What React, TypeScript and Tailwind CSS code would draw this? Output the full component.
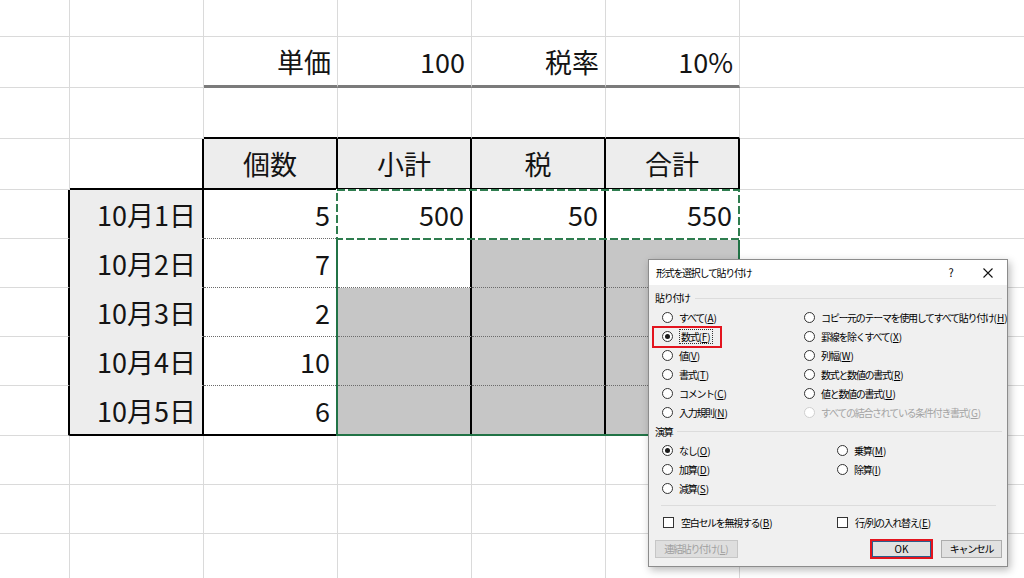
import React from 'react';

const colCount = 7;
const rowCount = 12;

const dates = ['10月1日', '10月2日', '10月3日', '10月4日', '10月5日'];
const counts = ['5', '7', '2', '10', '6'];

type CellText = { text: string; align: 'right' | 'center' };

function cellText(r: number, c: number): CellText | null {
  if (r === 1) {
    const top = ['', '', '単価', '100', '税率', '10%', ''];
    return top[c] ? { text: top[c], align: 'right' } : null;
  }
  if (r === 3) {
    const head = ['', '', '個数', '小計', '税', '合計', ''];
    return head[c] ? { text: head[c], align: 'center' } : null;
  }
  if (r >= 4 && r <= 8) {
    const i = r - 4;
    if (c === 1) return { text: dates[i], align: 'right' };
    if (c === 2) return { text: counts[i], align: 'right' };
    if (r === 4 && c === 3) return { text: '500', align: 'right' };
    if (r === 4 && c === 4) return { text: '50', align: 'right' };
    if (r === 4 && c === 5) return { text: '550', align: 'right' };
  }
  return null;
}

function isSelectedFill(r: number, c: number) {
  if (r === 5 && (c === 4 || c === 5)) return true;
  return r >= 6 && r <= 8 && c >= 3 && c <= 5;
}

function cellClass(r: number, c: number) {
  let right = 'border-r border-r-[#dadada]';
  let bottom = 'border-b border-b-[#dadada]';
  let bg = 'bg-white';
  const inTable = c >= 2 && c <= 5;

  if (c === 6) right = 'border-r-0';
  if (r === 11) bottom = 'border-b-0';

  if (r === 1 && inTable) bottom = 'border-b-[3px] border-b-[#7b7b7b]';
  if (r === 2 && inTable) bottom = 'border-b-2 border-b-black';

  if (r === 3) {
    if (c === 1) {
      right = 'border-r-2 border-r-black';
      bottom = 'border-b-2 border-b-black';
    }
    if (inTable) {
      right = 'border-r-2 border-r-black';
      bottom = 'border-b-2 border-b-black';
      bg = 'bg-[#ededed]';
    }
  }

  if (r >= 4 && r <= 8) {
    if (c <= 5) right = 'border-r-2 border-r-black';
    if (c === 1) {
      bg = 'bg-[#ededed]';
      bottom = r === 8 ? 'border-b-2 border-b-black' : 'border-b border-b-transparent';
    }
    if (inTable) {
      bottom =
        r === 8
          ? 'border-b-2 border-b-black'
          : 'border-b border-b-[#6b6b6b] [border-bottom-style:dotted]';
    }
    if (isSelectedFill(r, c)) bg = 'bg-[#c6c6c6]';
  }

  return `${right} ${bottom} ${bg}`;
}

function Sheet() {
  const cells = [];
  for (let r = 0; r < rowCount; r++) {
    for (let c = 0; c < colCount; c++) {
      const t = cellText(r, c);
      cells.push(
        <div
          key={`${r}-${c}`}
          className={`flex items-center ${t?.align === 'center' ? 'justify-center' : 'justify-end pr-[6px]'} ${cellClass(r, c)}`}
        >
          {t && <span className="text-[27px] leading-none text-[#141414]">{t.text}</span>}
        </div>
      );
    }
  }

  return (
    <div className="relative">
      <div className="grid h-[578px] grid-cols-[70px_134px_134px_134px_134px_134px_1fr] grid-rows-[37px_51px_51px_51px_49px_49px_49px_49px_50px_49px_49px_44px]">
        {cells}
      </div>

      {/* selection range */}
      <div className="absolute left-[336px] top-[238px] h-[198px] w-[404px] border-2 border-[#217346]" />

      {/* copy marquee */}
      <svg className="absolute left-[336px] top-[189px]" width="404" height="51">
        <rect x="1" y="1" width="402" height="49" fill="none" stroke="#ffffff" strokeWidth="2" />
        <rect
          x="1"
          y="1"
          width="402"
          height="49"
          fill="none"
          stroke="#2f7d4f"
          strokeWidth="2"
          strokeDasharray="8 3"
        />
      </svg>
    </div>
  );
}

type Opt = { label: string; key: string; checked?: boolean; disabled?: boolean; focus?: boolean };

const pasteOpts: Opt[] = [
  { label: 'すべて', key: 'A' },
  { label: '数式', key: 'F', checked: true, focus: true },
  { label: '値', key: 'V' },
  { label: '書式', key: 'T' },
  { label: 'コメント', key: 'C' },
  { label: '入力規則', key: 'N' },
  { label: 'コピー元のテーマを使用してすべて貼り付け', key: 'H' },
  { label: '罫線を除くすべて', key: 'X' },
  { label: '列幅', key: 'W' },
  { label: '数式と数値の書式', key: 'R' },
  { label: '値と数値の書式', key: 'U' },
  { label: 'すべての結合されている条件付き書式', key: 'G', disabled: true },
];

const opOpts: Opt[] = [
  { label: 'なし', key: 'O', checked: true },
  { label: '加算', key: 'D' },
  { label: '減算', key: 'S' },
  { label: '乗算', key: 'M' },
  { label: '除算', key: 'I' },
];

function Radio({ checked, disabled }: { checked?: boolean; disabled?: boolean }) {
  return (
    <span
      className={`flex h-[11px] w-[11px] shrink-0 items-center justify-center rounded-full border bg-white ${
        disabled ? 'border-[#cfcfcf]' : 'border-[#333333]'
      }`}
    >
      {checked && <span className="h-[5px] w-[5px] rounded-full bg-[#1a1a1a]" />}
    </span>
  );
}

// Japanese part is condensed to mimic Meiryo UI; the access key stays normal width
function Label({ label, k }: { label: string; k: string }) {
  return (
    <>
      {label}
      <span className="tracking-normal">
        (<span className="underline underline-offset-1">{k}</span>)
      </span>
    </>
  );
}

function OptionRow({ opt }: { opt: Opt }) {
  return (
    <div
      className={`flex items-center gap-[6px] whitespace-nowrap ${opt.disabled ? 'text-[#a3a3a3]' : 'text-black'}`}
    >
      <Radio checked={opt.checked} disabled={opt.disabled} />
      <span className={opt.focus ? 'border border-dotted border-[#333] px-px leading-[13px]' : ''}>
        <Label label={opt.label} k={opt.key} />
      </span>
    </div>
  );
}

function GroupHeader({ title, h }: { title: string; h: string }) {
  return (
    <div className={`flex items-center ${h}`}>
      <span>{title}</span>
      <span className="ml-[5px] h-px flex-1 bg-[#dcdcdc]" />
    </div>
  );
}

function Checkbox({ label, k }: { label: string; k: string }) {
  return (
    <div className="flex items-center gap-[7px] whitespace-nowrap">
      <span className="h-[11px] w-[11px] shrink-0 border border-[#333333] bg-white" />
      <span>
        <Label label={label} k={k} />
      </span>
    </div>
  );
}

function PasteSpecialDialog() {
  return (
    <div className="absolute left-[648px] top-[259px] w-[360px] border border-[#8c8c8c] bg-[#f0f0f0] text-[10px] leading-none tracking-[-1.3px] shadow-[2px_3px_8px_rgba(0,0,0,0.28)]">
      {/* title bar */}
      <div className="flex h-[25px] items-center bg-white pl-[7px] pr-[13px] whitespace-nowrap">
        <span>形式を選択して貼り付け</span>
        <span className="ml-auto w-[12px] text-center text-[11px] tracking-normal">?</span>
        <span className="ml-[25px] flex w-[12px] justify-center">
          <svg width="10" height="10" viewBox="0 0 10 10">
            <path d="M0.5 0.5 L9.5 9.5 M9.5 0.5 L0.5 9.5" stroke="#111" strokeWidth="1.1" />
          </svg>
        </span>
      </div>

      <div className="pl-[6px] pr-[5px] pt-[3px] pb-[7px]">
        <GroupHeader title="貼り付け" h="h-[20px]" />
        <div className="grid grid-flow-col grid-cols-[142px_1fr] grid-rows-[repeat(6,19px)] pl-[7px]">
          {pasteOpts.map((o) => (
            <OptionRow key={o.key} opt={o} />
          ))}
        </div>

        <GroupHeader title="演算" h="h-[19px]" />
        <div className="grid grid-flow-col grid-cols-[175px_1fr] grid-rows-[repeat(3,19px)] pl-[7px]">
          {opOpts.map((o) => (
            <OptionRow key={o.key} opt={o} />
          ))}
        </div>

        <div className="mx-[6px] mt-[7px] h-px bg-[#dcdcdc]" />

        <div className="mt-[7px] grid h-[19px] grid-cols-[174px_1fr] items-center pl-[8px]">
          <Checkbox label="空白セルを無視する" k="B" />
          <Checkbox label="行/列の入れ替え" k="E" />
        </div>

        <div className="mt-[7px] flex h-[20px] items-center whitespace-nowrap">
          <div className="flex h-[18px] w-[83px] items-center justify-center border border-[#c6c6c6] bg-[#dedede] text-[#a0a0a0]">
            <Label label="連結貼り付け" k="L" />
          </div>
          <div className="ml-auto h-[20px] w-[63px] border-2 border-[#e3141e]">
            <div className="flex h-full w-full items-center justify-center border border-[#2b5d8c] bg-[#e1e1e1] tracking-normal">
              OK
            </div>
          </div>
          <div className="ml-[8px] flex h-[18px] w-[61px] items-center justify-center border border-[#adadad] bg-[#e1e1e1]">
            キャンセル
          </div>
        </div>
      </div>

      {/* highlight around 数式 */}
      <div className="absolute left-[3px] top-[66px] h-[22px] w-[70px] border-2 border-[#e3141e]" />
    </div>
  );
}

export default function App() {
  return (
    <div className="relative h-[578px] w-[1024px] overflow-hidden bg-white font-['Noto_Sans_CJK_JP',sans-serif]">
      <Sheet />
      <PasteSpecialDialog />
    </div>
  );
}
